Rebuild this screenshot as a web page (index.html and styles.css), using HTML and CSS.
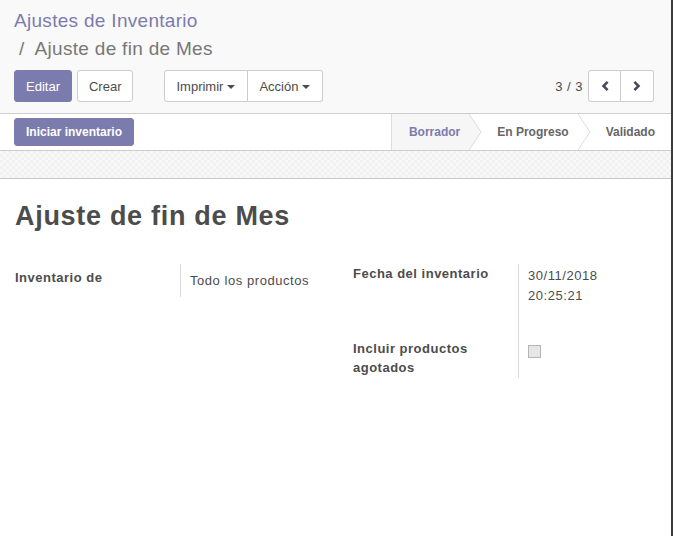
FILE: index.html
```html
<!DOCTYPE html>
<html lang="es">
<head>
<meta charset="utf-8">
<title>Ajuste de fin de Mes</title>
<link rel="stylesheet" href="styles.css">
</head>
<body>
<div class="app">
  <div class="cp">
    <ol class="bc">
      <li class="bc-link">Ajustes de Inventario</li>
      <li class="bc-active"><span class="sep">/</span>Ajuste de fin de Mes</li>
    </ol>
    <div class="cp-row">
      <div class="cp-buttons">
        <button class="btn btn-primary">Editar</button>
        <button class="btn btn-default">Crear</button>
        <div class="btn-group">
          <button class="btn btn-default">Imprimir<span class="caret"></span></button>
          <button class="btn btn-default">Acción<span class="caret"></span></button>
        </div>
      </div>
      <div class="pager">
        <span class="pager-value">3 / 3</span>
        <div class="btn-group">
          <button class="btn btn-default btn-icon" aria-label="Anterior">
            <svg width="8" height="10" viewBox="0 0 8 10"><path d="M6.6 0.9 L2.5 5 L6.6 9.1" fill="none" stroke="#4a4a58" stroke-width="2.6"/></svg>
          </button>
          <button class="btn btn-default btn-icon" aria-label="Siguiente">
            <svg width="8" height="10" viewBox="0 0 8 10"><path d="M1.4 0.9 L5.5 5 L1.4 9.1" fill="none" stroke="#4a4a58" stroke-width="2.6"/></svg>
          </button>
        </div>
      </div>
    </div>
  </div>

  <div class="statusbar">
    <div class="sb-buttons">
      <button class="btn btn-primary btn-sm">Iniciar inventario</button>
    </div>
    <div class="sb-states">
      <div class="state state-current">Borrador
        <svg class="arrow" width="13" height="36" viewBox="0 0 13 36"><polygon points="0,0 12,18 0,36" fill="#f6f6f6"/><polyline points="0,0 12,18 0,36" fill="none" stroke="#dcdcdc" stroke-width="1"/></svg>
      </div>
      <div class="state">En Progreso
        <svg class="arrow" width="13" height="36" viewBox="0 0 13 36"><polygon points="0,0 12,18 0,36" fill="#ffffff"/><polyline points="0,0 12,18 0,36" fill="none" stroke="#dcdcdc" stroke-width="1"/></svg>
      </div>
      <div class="state state-last">Validado</div>
    </div>
  </div>

  <div class="sheet-bg"></div>

  <div class="sheet">
    <h1 class="title">Ajuste de fin de Mes</h1>
    <div class="groups">
      <div class="group group-left">
        <div class="cell label">Inventario de</div>
        <div class="cell value">Todo los productos</div>
      </div>
      <div class="group group-right">
        <div class="cell label">Fecha del inventario</div>
        <div class="cell value">30/11/2018<br>20:25:21</div>
        <div class="cell label label-2">Incluir productos agotados</div>
        <div class="cell value value-2"><span class="checkbox"></span></div>
      </div>
    </div>
  </div>
</div>
</body>
</html>
```

FILE: styles.css
```css
* { box-sizing: border-box; }

html, body {
  margin: 0;
  padding: 0;
  background: #ffffff;
}

body {
  font-family: "Liberation Sans", Arial, sans-serif;
  color: #4c4c4c;
  font-size: 13px;
}

.app {
  width: 673px;
  min-height: 536px;
  border-right: 2px solid #3c3c3c;
  display: flex;
  flex-direction: column;
}

/* Control panel */
.cp {
  background: #f9f9f9;
  border-bottom: 1px solid #cdcdcd;
  padding: 7px 17px 11px 14px;
}

.bc {
  list-style: none;
  margin: 0;
  padding: 0;
  font-size: 19px;
  letter-spacing: 0.3px;
  line-height: 28px;
}

.bc-link { color: #7c7bad; }

.bc-active { color: #777777; }

.bc .sep {
  display: inline-block;
  margin-left: 5px;
  margin-right: 10px;
}

.cp-row {
  margin-top: 7px;
  display: flex;
  align-items: center;
  justify-content: space-between;
}

.cp-buttons {
  display: flex;
  align-items: center;
}

.btn {
  font-family: "Liberation Sans", Arial, sans-serif;
  font-size: 13px;
  height: 32px;
  padding: 0 11px;
  border: 1px solid #cccccc;
  border-radius: 3px;
  background: #ffffff;
  color: #4c4c4c;
  display: inline-flex;
  align-items: center;
  cursor: pointer;
  margin: 0;
}

.btn-primary {
  background: #7c7bad;
  border-color: #7c7bad;
  color: #ffffff;
}

.cp-buttons .btn-default { margin-left: 5px; }

.cp-buttons .btn-group { margin-left: 31px; }

.btn-group {
  display: flex;
}

.cp-buttons .btn-group .btn { margin-left: 0; }

.btn-group .btn:first-child {
  border-top-right-radius: 0;
  border-bottom-right-radius: 0;
}

.btn-group .btn:last-child {
  border-top-left-radius: 0;
  border-bottom-left-radius: 0;
  border-left: none;
}

.caret {
  display: inline-block;
  width: 0;
  height: 0;
  margin-left: 4px;
  margin-right: 1px;
  margin-top: 1px;
  border-top: 4px solid #4c4c4c;
  border-left: 4.5px solid transparent;
  border-right: 4.5px solid transparent;
}

.pager {
  display: flex;
  align-items: center;
}

.pager-value {
  letter-spacing: 0.5px;
  margin-right: 5px;
  color: #4c4c4c;
}

.btn-icon {
  width: 33px;
  padding: 0;
  justify-content: center;
}

/* Status bar */
.statusbar {
  height: 37px;
  border-bottom: 1px solid #cdcdcd;
  display: flex;
  justify-content: space-between;
  align-items: stretch;
  padding-left: 14px;
}

.sb-buttons {
  display: flex;
  align-items: center;
}

.btn-sm {
  height: 28px;
  font-size: 12px;
  font-weight: bold;
  padding: 0 11px;
}

.sb-states {
  display: flex;
  align-items: stretch;
}

.state {
  position: relative;
  display: flex;
  align-items: center;
  font-size: 12px;
  font-weight: bold;
  color: #666666;
  padding: 0 10px 0 27px;
}

.state-current {
  background: #f6f6f6;
  color: #7c7bad;
  border-left: 1px solid #dcdcdc;
  padding-left: 17px;
}

.state-last { padding-right: 16px; }

.state .arrow {
  position: absolute;
  top: 0;
  right: -12px;
  z-index: 1;
}

/* Sheet background band */
.sheet-bg {
  height: 28px;
  border-bottom: 1px solid #c9c8d3;
  background-color: #f7f7f7;
  background-image: repeating-conic-gradient(#f1f1f1 0 25%, #f8f8f8 0 50%);
  background-size: 6px 6px;
}

/* Sheet */
.sheet {
  flex: 1;
  padding: 21px 0 0 15px;
  background: #ffffff;
}

.title {
  margin: 0;
  font-size: 27px;
  letter-spacing: 0.7px;
  line-height: 32px;
  font-weight: bold;
  color: #4c4c4c;
}

.groups {
  margin-top: 32px;
  display: grid;
  grid-template-columns: 338px 1fr;
}

.group {
  display: grid;
  grid-template-columns: 166px 1fr;
  align-content: start;
}

.cell {
  line-height: 20px;
}

.label {
  font-weight: bold;
  letter-spacing: 0.5px;
  border-right: 1px solid #d9d9d9;
  padding-right: 10px;
}

.value {
  letter-spacing: 0.55px;
  padding-left: 9px;
}

.group-left .label { padding-top: 4px; padding-bottom: 9px; }
.group-left .value { padding-top: 7px; }

.group-right { grid-template-rows: 75px auto; }
.group-right .value { padding-top: 2px; }
.group-right .label-2 { line-height: 19px; padding-bottom: 1px; }
.group-right .value-2 { padding-top: 6px; }

.checkbox {
  display: block;
  width: 13px;
  height: 13px;
  background: #e6e6e6;
  border: 1px solid #b5b5b5;
}
```
